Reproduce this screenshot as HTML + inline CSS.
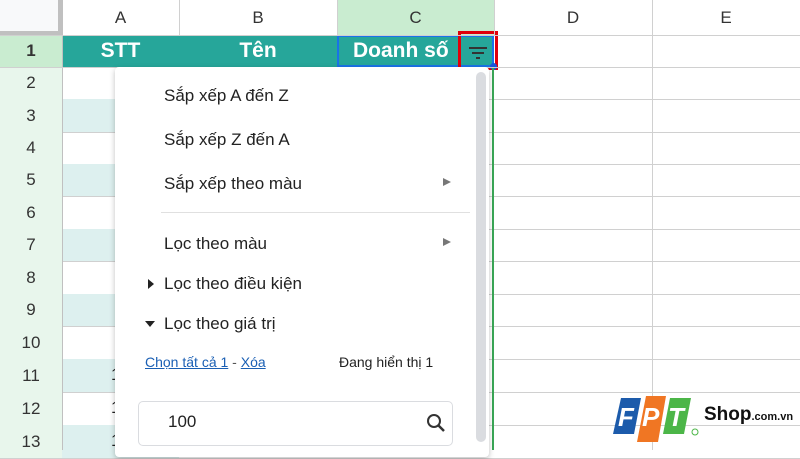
<!DOCTYPE html>
<html><head><meta charset="utf-8"><style>
*{margin:0;padding:0;box-sizing:border-box}
body{width:800px;height:450px;overflow:hidden;background:#fff;font-family:"Liberation Sans",Arial,sans-serif;position:relative}
.a{position:absolute}
.hl{position:absolute;height:1px;background:#d0d0d0}
.vl{position:absolute;width:1px;background:#d0d0d0}
.ch{position:absolute;top:0;height:35px;text-align:center;line-height:35px;font-size:17px;color:#333}
.rn{position:absolute;left:0;width:62px;text-align:center;font-size:17px;color:#333;background:#e8f6ec}
.mi{position:absolute;left:164px;font-size:17px;color:#222}
.arr{position:absolute;left:443px;width:0;height:0;border-left:8px solid #777;border-top:4px solid transparent;border-bottom:4px solid transparent}
</style></head><body>
<div class="a" style="left:0;top:0;width:62px;height:35px;background:#f8f9fa;border-right:4px solid #c0c0c0;border-bottom:4px solid #c0c0c0"></div>
<div class="ch" style="left:62px;width:117px">A</div>
<div class="ch" style="left:179px;width:158px">B</div>
<div class="ch" style="left:337px;width:157px;background:#c9ecd0">C</div>
<div class="ch" style="left:494px;width:158px">D</div>
<div class="ch" style="left:652px;width:148px">E</div>
<div class="rn" style="top:35px;height:32px;line-height:32px;background:#c9ecd0;font-weight:bold">1</div>
<div class="a" style="left:62px;top:35px;width:432px;height:32px;background:#26a69a"></div>
<div class="a" style="left:62px;top:35px;width:117px;height:32px;line-height:32px;text-align:center;color:#fff;font-weight:bold;font-size:21px">STT</div>
<div class="a" style="left:179px;top:35px;width:158px;height:32px;line-height:32px;text-align:center;color:#fff;font-weight:bold;font-size:21px">Tên</div>
<div class="a" style="left:337px;top:35px;width:157px;height:32px;border:2px solid #1a73e8"></div>
<div class="a" style="left:353px;top:35px;height:32px;line-height:32px;color:#fff;font-weight:bold;font-size:21px">Doanh số</div>
<div class="a" style="left:458px;top:31px;width:40px;height:39px;border:3px solid #e0000b"></div>
<div class="a" style="left:469px;top:47px;width:18px;height:2px;background:#333"></div>
<div class="a" style="left:472px;top:52px;width:12px;height:2px;background:#333"></div>
<div class="a" style="left:476px;top:57px;width:4px;height:2px;background:#333"></div>
<div class="a" style="left:490px;top:63px;width:7px;height:7px;border-radius:50%;background:#1a56db"></div>
<div id="rows"></div>
<div class="vl" style="left:179px;top:0;height:35px"></div>
<div class="vl" style="left:337px;top:0;height:35px"></div>
<div class="vl" style="left:494px;top:0;height:35px"></div>
<div class="vl" style="left:652px;top:0;height:450px"></div>
<div class="a" style="left:492px;top:67px;width:2px;height:383px;background:#3aa757"></div>
<div class="hl" style="left:0;top:35px;width:800px"></div>
<div class="hl" style="left:0;top:67px;width:800px"></div>
<!-- menu -->
<div class="a" style="left:115px;top:67px;width:374px;height:390px;background:#fff;box-shadow:0 2px 6px rgba(0,0,0,.25);border-radius:4px"></div>
<div class="a" style="left:476px;top:72px;width:10px;height:370px;background:#dadce0;border-radius:5px"></div>
<div class="mi" style="top:86px">Sắp xếp A đến Z</div>
<div class="mi" style="top:130px">Sắp xếp Z đến A</div>
<div class="mi" style="top:174px">Sắp xếp theo màu</div>
<div class="arr" style="top:178px"></div>
<div class="a" style="left:161px;top:212px;width:309px;height:1px;background:#e0e0e0"></div>
<div class="mi" style="top:234px">Lọc theo màu</div>
<div class="arr" style="top:238px"></div>
<div class="mi" style="top:274px">Lọc theo điều kiện</div>
<div class="a" style="left:148px;top:279px;border-left:6px solid #222;border-top:5px solid transparent;border-bottom:5px solid transparent"></div>
<div class="mi" style="top:314px">Lọc theo giá trị</div>
<div class="a" style="left:145px;top:321px;border-top:6px solid #222;border-left:5px solid transparent;border-right:5px solid transparent"></div>
<div class="a" style="left:145px;top:354px;font-size:14px;color:#1a5fb4"><u>Chọn tất cả 1</u> <span style="color:#555">-</span> <u>Xóa</u></div>
<div class="a" style="left:339px;top:354px;font-size:14px;color:#222">Đang hiển thị 1</div>
<div class="a" style="left:138px;top:401px;width:315px;height:45px;border:1px solid #dadce0;border-radius:5px"></div>
<div class="a" style="left:168px;top:412px;font-size:17px;color:#222">100</div>
<svg class="a" style="left:425px;top:412px" width="22" height="22" viewBox="0 0 22 22"><circle cx="9" cy="9" r="6" fill="none" stroke="#333" stroke-width="2"/><path d="M13.5 13.5 L19 19" stroke="#333" stroke-width="2.5"/></svg>
<!-- logo -->
<svg class="a" style="left:612px;top:396px" width="92" height="48" viewBox="0 0 92 48">
<path d="M9 2 H29 L22 38 H1 Z" fill="#1c5bab"/>
<path d="M34 0 H54 L46 46 H25 Z" fill="#f07623"/>
<path d="M58 2 H79 L72 38 H51 Z" fill="#4cb648"/>
<text x="6" y="30" font-family="Liberation Sans" font-weight="bold" font-style="italic" font-size="26" fill="#fff">F</text>
<text x="30" y="30" font-family="Liberation Sans" font-weight="bold" font-style="italic" font-size="26" fill="#fff">P</text>
<text x="56" y="30" font-family="Liberation Sans" font-weight="bold" font-style="italic" font-size="26" fill="#fff">T</text>
<circle cx="83" cy="36" r="3" fill="none" stroke="#4cb648" stroke-width="1"/>
</svg>
<div class="a" style="left:704px;top:404px;font-weight:bold;font-size:19px;color:#111">Shop<span style="font-size:11px">.com.vn</span></div>
<script>
var h='',t=[67,99,132,164,196,229,261,294,326,359,392,425,458];
for(var i=0;i<12;i++){var y=t[i],hh=t[i+1]-y,n=i+2;
h+='<div class="rn" style="top:'+y+'px;height:'+hh+'px;line-height:'+hh+'px">'+n+'</div>';
if(n%2==1)h+='<div class="a" style="left:62px;top:'+y+'px;width:117px;height:'+hh+'px;background:#ddf0ef"></div>';
if(n>=11)h+='<div class="a" style="left:111px;top:'+(y+6)+'px;font-size:17px;color:#222">1</div>';
h+='<div class="hl" style="left:0;top:'+(y+hh)+'px;width:800px"></div>';}
h+='<div class="vl" style="left:62px;top:0;height:450px;background:#c0c0c0"></div><div class="vl" style="left:179px;top:67px;height:383px"></div>';
document.getElementById('rows').innerHTML=h;
</script>
</body></html>
